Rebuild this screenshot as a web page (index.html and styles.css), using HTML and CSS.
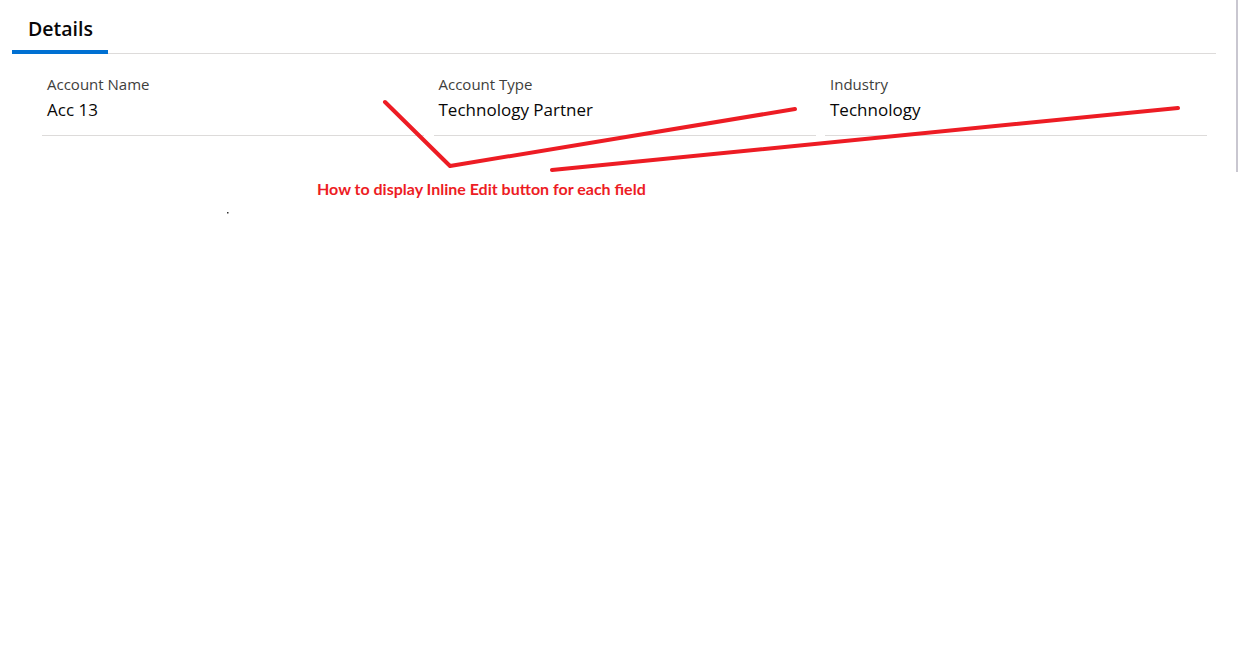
FILE: index.html
```html
<!DOCTYPE html>
<html>
<head>
<meta charset="utf-8">
<link rel="stylesheet" href="styles.css">
</head>
<body>
<div class="page">
  <div class="tabs">
    <div class="tab active">Details</div>
  </div>
  <div class="fields">
    <div class="field">
      <div class="label">Account Name</div>
      <div class="value">Acc 13</div>
    </div>
    <div class="field">
      <div class="label">Account Type</div>
      <div class="value">Technology Partner</div>
    </div>
    <div class="field">
      <div class="label">Industry</div>
      <div class="value">Technology</div>
    </div>
  </div>
  <div class="scrollbar"></div>
  <svg class="marks" width="1238" height="648" viewBox="0 0 1238 648">
    <polyline points="385,102 450,166 795,109" fill="none" stroke="#ed1c24" stroke-width="4" stroke-linecap="round" stroke-linejoin="round"/>
    <line x1="552" y1="170" x2="1178" y2="108" stroke="#ed1c24" stroke-width="4" stroke-linecap="round"/>
    <rect x="227" y="212" width="1.5" height="1.5" fill="#333"/>
  </svg>
  <div class="note">How to display Inline Edit button for each field</div>
</div>
</body>
</html>
```
FILE: styles.css
```css
html, body {
  margin: 0;
  padding: 0;
  background: #fff;
}
.page {
  position: relative;
  width: 1238px;
  height: 648px;
  overflow: hidden;
  font-family: "Open Sans", "Noto Sans", sans-serif;
  color: #080707;
}
.tabs {
  margin-left: 12px;
  width: 1204px;
  display: flex;
  border-bottom: 1px solid #dddbda;
}
.tab {
  padding: 16px 16px 0 16px;
  box-sizing: border-box;
  height: 54px;
  font-size: 19.5px;
  font-weight: 600;
  line-height: 26px;
  color: #080707;
  margin-bottom: -1px;
}
.tab.active {
  border-bottom: 4px solid #0070d2;
  width: 96px;
}
.fields {
  display: grid;
  grid-template-columns: 382px 382px 382px;
  column-gap: 9.5px;
  margin-left: 42px;
  padding-top: 18px;
}
.field {
  border-bottom: 1px solid #dddbda;
  padding: 1px 5px 0 5px;
  height: 64px;
  box-sizing: border-box;
}
.label {
  font-size: 15px;
  line-height: 22px;
  color: #3e3e3c;
}
.value {
  padding-top: 1px;
  font-size: 17px;
  line-height: 28px;
  color: #080707;
}
.scrollbar {
  position: absolute;
  left: 1236px;
  top: 0;
  width: 2px;
  height: 172px;
  background: #c9c7d0;
}
.marks {
  position: absolute;
  left: 0;
  top: 0;
}
.note {
  position: absolute;
  left: 317px;
  top: 179px;
  font-family: "Lato", sans-serif;
  font-weight: 700;
  font-size: 16px;
  line-height: 20px;
  color: #ed1c24;
}
```
